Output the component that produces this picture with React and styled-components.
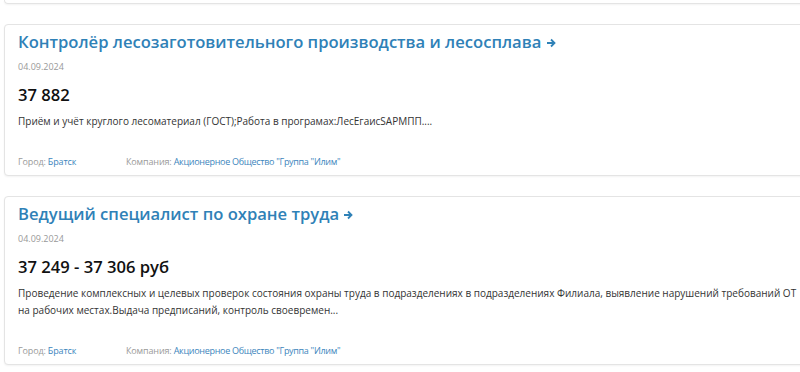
import React from 'react';
import styled, { createGlobalStyle } from 'styled-components';

const GlobalStyle = createGlobalStyle`
  html, body {
    margin: 0;
    padding: 0;
    background: #fff;
    overflow: hidden;
  }
  body {
    font-family: "Open Sans", "Noto Sans", sans-serif;
  }
`;

const Page = styled.div`
  width: 800px;
  height: 372px;
  overflow: hidden;
  padding-left: 4px;
  box-sizing: border-box;
`;

const List = styled.div`
  display: flex;
  flex-direction: column;
  gap: 20px;
  width: 812px;
`;

const CardTail = styled.div`
  height: 3px;
  border: 1px solid #e4e4e4;
  border-top: none;
  border-radius: 0 0 4px 4px;
  box-shadow: 0 1px 2px rgba(0, 0, 0, 0.05);
`;

const Card = styled.div`
  border: 1px solid #e4e4e4;
  border-radius: 4px;
  box-shadow: 0 1px 2px rgba(0, 0, 0, 0.05);
  padding: 4px 13px 6px;
  background: #fff;
`;

const Title = styled.a`
  display: block;
  font-size: 16.6px;
  line-height: 26px;
  font-weight: 600;
  color: #2f81b7;
  text-decoration: none;
`;

const Arrow = styled.svg`
  width: 10px;
  height: 10px;
  vertical-align: 0;
`;

const Date = styled.div`
  margin-top: 5px;
  font-size: 9px;
  line-height: 14px;
  color: #999;
`;

const Salary = styled.div`
  margin-top: 9px;
  font-size: 16.6px;
  line-height: 24px;
  font-weight: 600;
  color: #111;
`;

const Description = styled.p`
  margin: 6px 0 0;
  max-width: 790px;
  font-size: 10px;
  line-height: 17px;
  color: #333;
`;

const Footer = styled.div`
  display: flex;
  margin-top: 25px;
  font-size: 9px;
  line-height: 14px;
  letter-spacing: -0.15px;
`;

const FooterItem = styled.div`
  min-width: ${p => p.$min || 0}px;
  color: #9a9a9a;
`;

const FooterLink = styled.a`
  color: #3d86bd;
  text-decoration: none;
  letter-spacing: ${p => (p.$tight ? '-0.3px' : '-0.15px')};
`;

const vacancies = [
  {
    title: 'Контролёр лесозаготовительного производства и лесосплава',
    date: '04.09.2024',
    salary: '37 882',
    text: 'Приём и учёт круглого лесоматериал (ГОСТ);Работа в програмах:ЛесЕгаисSAPМПП....',
    city: 'Братск',
    company: 'Акционерное Общество "Группа "Илим"'
  },
  {
    title: 'Ведущий специалист по охране труда',
    date: '04.09.2024',
    salary: '37 249 - 37 306 руб',
    text: 'Проведение комплексных и целевых проверок состояния охраны труда в подразделениях в подразделениях Филиала, выявление нарушений требований ОТ на рабочих местах.Выдача предписаний, контроль своевремен...',
    city: 'Братск',
    company: 'Акционерное Общество "Группа "Илим"'
  }
];

const App = () => (
  <Page>
    <GlobalStyle />
    <List>
      <CardTail />
      {vacancies.map((v, i) => (
        <Card key={i}>
          <Title href="#">
            {v.title}{' '}
            <Arrow viewBox="0 0 10 10" fill="none" stroke="currentColor" strokeWidth="1.8">
              <path d="M1 5h7.5M5 1.5 8.5 5 5 8.5" />
            </Arrow>
          </Title>
          <Date>{v.date}</Date>
          <Salary>{v.salary}</Salary>
          <Description>{v.text}</Description>
          <Footer>
            <FooterItem $min={108}>
              Город: <FooterLink href="#">{v.city}</FooterLink>
            </FooterItem>
            <FooterItem>
              Компания: <FooterLink href="#" $tight>{v.company}</FooterLink>
            </FooterItem>
          </Footer>
        </Card>
      ))}
    </List>
  </Page>
);

export default App;
